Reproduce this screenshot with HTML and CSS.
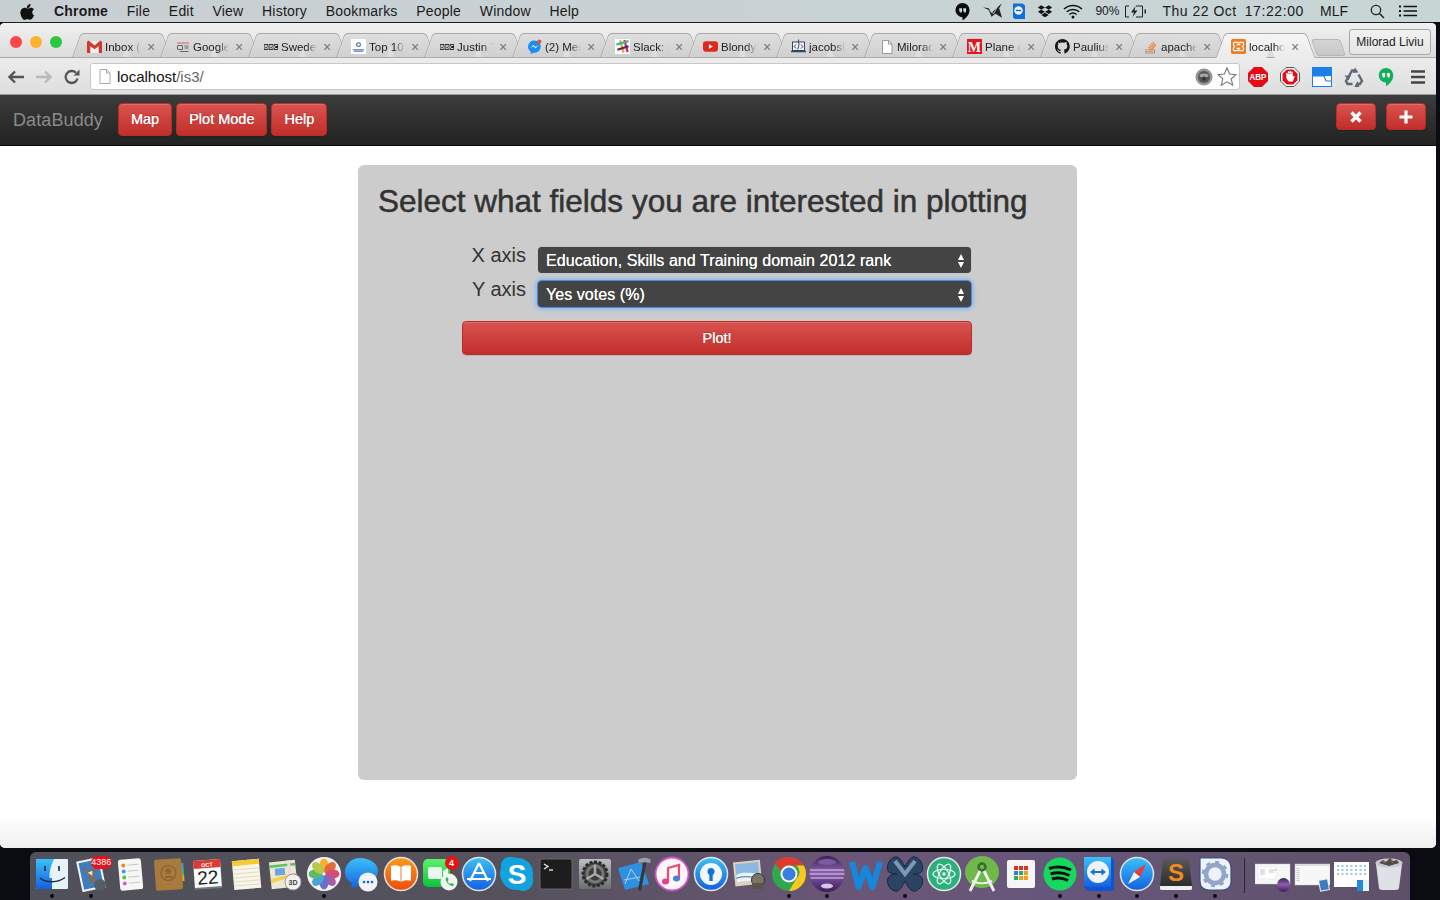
FILE: index.html
```html
<!DOCTYPE html>
<html lang="en">
<head>
<meta charset="utf-8">
<title>DataBuddy</title>
<link rel="stylesheet" href="styles.css">
</head>
<body>
<svg class="defs" width="0" height="0" aria-hidden="true">
  <defs>
    <linearGradient id="gBlue" x1="0" y1="0" x2="0" y2="1"><stop offset="0" stop-color="#3cc0f8"/><stop offset="1" stop-color="#1460e0"/></linearGradient>
    <linearGradient id="gOrange" x1="0" y1="0" x2="0" y2="1"><stop offset="0" stop-color="#fb9a1a"/><stop offset="1" stop-color="#f04a0c"/></linearGradient>
    <linearGradient id="gGreen" x1="0" y1="0" x2="0" y2="1"><stop offset="0" stop-color="#5ef06a"/><stop offset="1" stop-color="#0bc43a"/></linearGradient>
    <linearGradient id="gPurple" x1="0" y1="0" x2="0" y2="1"><stop offset="0" stop-color="#3d2154"/><stop offset=".45" stop-color="#8a5fae"/><stop offset="1" stop-color="#3c1c5a"/></linearGradient>
    <linearGradient id="gGrey" x1="0" y1="0" x2="0" y2="1"><stop offset="0" stop-color="#b9c0c2"/><stop offset="1" stop-color="#6c6f70"/></linearGradient>
    <linearGradient id="gSub" x1="0" y1="0" x2="0" y2="1"><stop offset="0" stop-color="#5a5a5a"/><stop offset="1" stop-color="#2c2c2c"/></linearGradient>
  </defs>
</svg>

<header class="menubar">
  <svg class="apple" viewBox="0 0 16 18"><path d="M11.300 1c.1 1.200-.4 2.300-1.100 3.100-.7.800-1.800 1.400-2.900 1.300-.1-1.100.4-2.300 1.100-3C9.100 1.600 10.300 1 11.300 1zM14.900 13.200c-.4 1-.6 1.400-1.100 2.200-.7 1.100-1.700 2.500-3 2.500-1.100 0-1.400-.7-2.900-.7s-1.800.7-2.900.7c-1.300 0-2.200-1.200-2.900-2.300C.2 12.500-.1 8.900 1.200 7c.9-1.300 2.300-2.100 3.700-2.100 1.400 0 2.200.8 3.400.8 1.100 0 1.800-.8 3.400-.8 1.200 0 2.500.7 3.400 1.800-3 1.700-2.500 5.900.8 6.500z" fill="#111"/></svg>
  <nav class="menu">
    <b>Chrome</b><span>File</span><span>Edit</span><span>View</span><span>History</span><span>Bookmarks</span><span>People</span><span>Window</span><span>Help</span>
  </nav>
  <div class="status">
    <svg class="st st-hang" viewBox="0 0 16 20"><path d="M8 1a7.500 7.500 0 0 0-7.500 7.500C.5 12.600 4 16 8 16v3.500c3.500-1.800 7.500-5.800 7.500-11A7.500 7.500 0 0 0 8 1z" fill="#0c0c0c"/><path d="M4.500 6.500h3v3c0 1.200-.8 1.800-1.800 2V10H4.500zM8.800 6.500h3v3c0 1.200-.8 1.800-1.800 2V10H8.800z" fill="#cfd8d8"/></svg>
    <svg class="st st-bird" viewBox="0 0 22 18"><path d="M1 5l6 3 3 7 4-3 7 4-3-10 3-5-6 5-5 5-3-5z" fill="#222"/><path d="M8 8l4 4 4-7" stroke="#cfd8d8" stroke-width=".8" fill="none"/></svg>
    <svg class="st st-tv" viewBox="0 0 14 18"><path d="M1 1.500h9.500l2.500 2V17l-2 0H3l-2-1.500z" fill="#1170d8"/><circle cx="6.500" cy="8.500" r="4.200" fill="#f2f6fa"/><path d="M3.500 8.500l2-1.500v1h2v-1l2 1.500-2 1.500v-1h-2v1z" fill="#1170d8"/></svg>
    <svg class="st st-drop" viewBox="0 0 18 16"><path d="M4.700 1L1 3.500l3.700 2.400L9 3.500zM13.300 1L9 3.500l4.300 2.400L17 3.500zM1 8.300l3.700 2.500L9 8.300 4.700 5.900zM13.300 5.900L9 8.300l4.300 2.500L17 8.300zM4.800 11.800L9 14.400l4.200-2.600L9 9.300z" fill="#111"/></svg>
    <svg class="st st-wifi" viewBox="0 0 20 15"><path d="M1 5c5-4.800 13-4.800 18 0M3.700 7.800c3.600-3.200 9-3.200 12.600 0M6.400 10.500c2.100-1.700 5.100-1.700 7.200 0" fill="none" stroke="#111" stroke-width="1.500"/><circle cx="10" cy="13" r="1.500" fill="#111"/></svg>
    <span class="batt-txt">90%</span>
    <svg class="st st-batt" viewBox="0 0 23 13"><path d="M5 1H1.500v11H5M12 1h6.500v11H12" fill="none" stroke="#222"/><path d="M11.500 1L7 7.500h3L8.500 12l5-6.500h-3z" fill="#222"/><rect x="20.500" y="4.500" width="1.500" height="4" fill="#222"/></svg>
    <span class="date">Thu 22 Oct</span>
    <span class="time">17:22:00</span>
    <span class="mlf">MLF</span>
    <svg class="st st-search" viewBox="0 0 15 15"><circle cx="6" cy="6" r="4.700" fill="none" stroke="#222" stroke-width="1.300"/><path d="M9.500 9.500l4.500 4.500" stroke="#222" stroke-width="1.500"/></svg>
    <svg class="st st-list" viewBox="0 0 18 12"><path d="M4.500 1.500H18M4.500 6H18M4.500 10.500H18" stroke="#111" stroke-width="1.400"/><path d="M0 1.500h2M0 6h2M0 10.500h2" stroke="#111" stroke-width="1.800"/></svg>
  </div>
</header>

<div class="window">
  <div class="tabstrip">
    <div class="lights"><i class="light red"></i><i class="light yellow"></i><i class="light green"></i></div>
    <div class="tabs">
      <div class="tab">
        <svg class="fav fav-wide" viewBox="0 0 14 14"><rect y="2" width="14" height="11" fill="#eee"/><path d="M0 2.500v10.500h3V6.500L7 9.500l4-3V13h3V2.500L12.500 1.500 7 6 1.500 1.500z" fill="#d0392b"/></svg>
        <span class="tab-title">Inbox (1</span><span class="tab-x">×</span>
      </div>
      <div class="tab">
        <svg class="fav" viewBox="0 0 14 14"><path d="M1 3h12" stroke="#c66" stroke-width="1"/><path d="M1.500 5.500h5v4h-5zM8.500 6h4M8.500 8h4M4 11.500h8.500" fill="none" stroke="#666" stroke-width="1"/></svg>
        <span class="tab-title">Google</span><span class="tab-x">×</span>
      </div>
      <div class="tab">
        <svg class="fav" viewBox="0 0 15 14"><rect x="0" y="4" width="4.600" height="6" fill="#111"/><rect x="5.200" y="4" width="4.600" height="6" fill="#111"/><rect x="10.400" y="4" width="4.600" height="6" fill="#111"/><g class="bbc-letters"><text x="2.300" y="9">B</text><text x="7.500" y="9">B</text><text x="12.700" y="9">C</text></g></svg>
        <span class="tab-title">Sweden</span><span class="tab-x">×</span>
      </div>
      <div class="tab">
        <svg class="fav fav-wide" viewBox="0 0 16 16"><rect width="16" height="16" fill="#fff"/><circle cx="8" cy="6" r="2" fill="none" stroke="#3a5fa5" stroke-width="1.200"/><path d="M2 11.500h12M3 13h10" stroke="#3a5fa5" stroke-width="1"/></svg>
        <span class="tab-title">Top 10</span><span class="tab-x">×</span>
      </div>
      <div class="tab">
        <svg class="fav" viewBox="0 0 15 14"><rect x="0" y="4" width="4.600" height="6" fill="#111"/><rect x="5.200" y="4" width="4.600" height="6" fill="#111"/><rect x="10.400" y="4" width="4.600" height="6" fill="#111"/><g class="bbc-letters"><text x="2.300" y="9">B</text><text x="7.500" y="9">B</text><text x="12.700" y="9">C</text></g></svg>
        <span class="tab-title">Justin T</span><span class="tab-x">×</span>
      </div>
      <div class="tab">
        <svg class="fav fav-wide" viewBox="0 0 14 14"><path d="M7 1.500a6 5.700 0 0 0-3.500 10.300V14l2.200-1.200A6 5.700 0 1 0 7 1.500z" fill="#1a8cf5"/><path d="M3 8.500l3-3 2 2 3-2-3 3.300-2-2z" fill="#fff"/><circle cx="11.500" cy="2.500" r="2" fill="#e8513a"/></svg>
        <span class="tab-title">(2) Mes</span><span class="tab-x">×</span>
      </div>
      <div class="tab">
        <svg class="fav fav-wide" viewBox="0 0 16 16"><rect width="16" height="16" fill="#fff"/><path d="M5.500 1.500l3.500 13" stroke="#e9a820" stroke-width="2.400"/><path d="M10 1l3.500 13" stroke="#e01e5a" stroke-width="2.400"/><path d="M1.500 6l13-3.800" stroke="#3eb991" stroke-width="2.400"/><path d="M2.500 11.500l12-3.800" stroke="#4b2a6a" stroke-width="2.400"/></svg>
        <span class="tab-title">Slack: |</span><span class="tab-x">×</span>
      </div>
      <div class="tab">
        <svg class="fav fav-wide" viewBox="0 0 16 14"><rect y="1.500" width="16" height="11" rx="3" fill="#dc2a20"/><path d="M6.300 4.500v5l4.200-2.500z" fill="#fff"/></svg>
        <span class="tab-title">Blondy</span><span class="tab-x">×</span>
      </div>
      <div class="tab">
        <svg class="fav fav-wide" viewBox="0 0 15 14"><rect x="1.500" y="2.500" width="12" height="8.500" fill="#f4f4f4" stroke="#33466a"/><path d="M0 12h15" stroke="#33466a" stroke-width="1.500"/><path d="M5 5l-1.800 2L5 9M10 5l1.800 2L10 9M8.300 4L6.700 10M7.500 0v4" fill="none" stroke="#33466a"/></svg>
        <span class="tab-title">jacobsl</span><span class="tab-x">×</span>
      </div>
      <div class="tab">
        <svg class="fav" viewBox="0 0 14 14"><path d="M2.500 .5h6l3.500 3.500v9.500H2.500z" fill="#fff" stroke="#999"/><path d="M8.500 .5V4H12" fill="none" stroke="#999"/></svg>
        <span class="tab-title">Milorad</span><span class="tab-x">×</span>
      </div>
      <div class="tab">
        <svg class="fav fav-wide" viewBox="0 0 16 16"><rect width="16" height="16" fill="#e8141c"/><text class="mail-m" x="8" y="14">M</text></svg>
        <span class="tab-title">Plane c</span><span class="tab-x">×</span>
      </div>
      <div class="tab">
        <svg class="fav fav-wide" viewBox="0 0 16 16"><path d="M8 0a8 8 0 0 0-2.500 15.600c.4.100.5-.2.500-.4v-1.400c-2.200.5-2.700-1-2.700-1-.4-.9-.9-1.200-.9-1.200-.7-.5.100-.5.100-.5.800.1 1.200.8 1.200.8.700 1.200 1.900.9 2.300.7.100-.5.300-.9.500-1.100-1.800-.2-3.600-.9-3.600-4 0-.9.300-1.600.8-2.100-.1-.2-.4-1 .1-2.100 0 0 .7-.2 2.200.8a7.600 7.600 0 0 1 4 0c1.500-1 2.200-.8 2.200-.8.400 1.100.2 1.900.1 2.100.5.600.8 1.300.8 2.100 0 3.100-1.900 3.700-3.700 3.900.3.300.6.800.6 1.500v2.200c0 .2.100.5.500.4A8 8 0 0 0 8 0z" fill="#161514"/></svg>
        <span class="tab-title">Paulius</span><span class="tab-x">×</span>
      </div>
      <div class="tab">
        <svg class="fav" viewBox="0 0 14 14"><path d="M2 9v4h8.500V9" fill="none" stroke="#9a9a9a" stroke-width="1.200"/><path d="M3.500 11.200h5.500M3.700 9.300l5.400.6M4.300 7.300l5.200 1.500M5.400 5.200l4.700 2.500M7 3.400l4 3.400M8.800 1.800l3 4" stroke="#ef8236" stroke-width="1.100"/></svg>
        <span class="tab-title">apache</span><span class="tab-x">×</span>
      </div>
      <div class="tab tab-active">
        <svg class="fav fav-wide" viewBox="0 0 16 16"><rect width="16" height="16" rx="2" fill="#f07c24"/><path d="M4 3.500h2.500c1 0 1.500.6 1.500 1.500 0-.9.500-1.500 1.500-1.500H12c1 0 1.500 1 1.500 2s-1 2.500-2 2.500c1 0 2 1.500 2 2.500s-.5 2-1.500 2H9.500C8.500 12.500 8 11.900 8 11c0 .9-.5 1.500-1.500 1.500H4c-1 0-1.500-1-1.500-2S3.500 8 4.500 8c-1 0-2-1.500-2-2.500s.5-2 1.500-2zM6 6h4M6 10h4" fill="none" stroke="#fff" stroke-width="1.300"/></svg>
        <span class="tab-title">localho</span><span class="tab-x">×</span>
      </div>
    </div>
    <i class="newtab"></i>
    <button class="profile" type="button">Milorad Liviu</button>
  </div>

  <div class="toolbar">
    <svg class="tool" viewBox="0 0 16 14"><path d="M7 1.500L1.500 7 7 12.500M2 7h14" fill="none" stroke="#555" stroke-width="2.300"/></svg>
    <svg class="tool tool-fwd" viewBox="0 0 16 14"><path d="M9 1.500L14.500 7 9 12.500M14 7H0" fill="none" stroke="#b9b9b9" stroke-width="2.300"/></svg>
    <svg class="tool tool-rel" viewBox="0 0 16 16"><path d="M13.500 9.500A6 6 0 1 1 12 3.800" fill="none" stroke="#555" stroke-width="2.300"/><path d="M9.500 6.500H15.500V.5z" fill="#555"/></svg>
    <div class="omnibox">
      <svg class="doc" viewBox="0 0 12 15"><path d="M1 .5h6.500L11 4v10.500H1z" fill="#fff" stroke="#aaa"/><path d="M7.500 .5V4H11" fill="none" stroke="#aaa"/></svg>
      <span class="host">localhost</span><span class="path">/is3/</span>
      <svg class="globe" viewBox="0 0 18 18"><circle cx="9" cy="9" r="8.500" fill="#959595"/><circle cx="9" cy="9" r="6" fill="#555"/><ellipse cx="9" cy="7.500" rx="4.500" ry="2" fill="#a5a5a5"/><circle cx="9" cy="10.500" r="2" fill="#333"/></svg>
      <svg class="star" viewBox="0 0 20 19"><path d="M10 1l2.700 6 6.300.6-4.800 4.200 1.500 6.400L10 14.800 4.300 18.200l1.500-6.400L1 7.600 7.300 7z" fill="#fff" stroke="#777" stroke-width="1.100"/></svg>
    </div>
    <div class="exts">
      <svg class="ext" viewBox="0 0 20 20"><path d="M6 0h8l6 6v8l-6 6H6l-6-6V6z" fill="#e30d16"/><text class="abp" x="10" y="13.300" textLength="17" lengthAdjust="spacingAndGlyphs">ABP</text></svg>
      <svg class="ext" viewBox="0 0 20 20"><path d="M6 .5h8L19.500 6v8L14 19.500H6L.5 14V6z" fill="#fff" stroke="#555"/><path d="M6.700 2.500h6.600L17.500 6.700v6.600L13.300 17.500H6.700L2.500 13.300V6.700z" fill="#e30d16"/><path d="M7 7v-.5M8.700 6V4.800M10.400 6V4.500M12.100 6.500V5.300" stroke="#fff" stroke-width="1.500" stroke-linecap="round"/><path d="M6.300 7h6.600v3l1.300-1.300.6.500-2 5.300H8.500l-2.200-3.500z" fill="#fff"/></svg>
      <svg class="ext" viewBox="0 0 20 20"><rect width="20" height="20" fill="#1c7ee8"/><rect x="1" y="9" width="18" height="10" fill="#fff"/><path d="M1 9h11l2 5h5" fill="none" stroke="#1c7ee8" stroke-width="1.200"/></svg>
      <svg class="ext" viewBox="0 0 20 20"><g fill="none" stroke="#5b6b7c" stroke-width="2.400"><path d="M4.500 10L8 3.500h3.500"/><path d="M14.500 7.500L18 14l-2 3h-3"/><path d="M8.500 17H3.500L2 14l1.500-2.500"/></g><path d="M11 .5l3.500 5-6 .5zM10 20.500L13.500 14l2 6.500zM.5 8.500L7 8.500l-2.500 5z" fill="#5b6b7c"/></svg>
      <svg class="ext" viewBox="0 0 20 22"><path d="M10 1a8 8 0 0 0-8 8c0 4.400 3.600 8 8 8v4c3.500-2 8-6.300 8-12a8 8 0 0 0-8-8z" fill="#0fb05a"/><path d="M5.800 6.500H9v3.500c0 1.200-.8 2-2 2.200V10.500H5.800zM11 6.500h3.200v3.500c0 1.200-.8 2-2 2.200V10.500H11z" fill="#fff"/></svg>
      <svg class="ext" viewBox="0 0 20 20"><path d="M3 4.500h14M3 10h14M3 15.500h14" stroke="#444" stroke-width="2.600"/></svg>
    </div>
  </div>

  <nav class="navbar">
    <a class="brand">DataBuddy</a>
    <div class="nav-btns">
      <button class="btn" type="button">Map</button>
      <button class="btn" type="button">Plot Mode</button>
      <button class="btn" type="button">Help</button>
    </div>
    <div class="nav-actions">
      <button class="btn btn-icon" type="button" aria-label="Close"><svg viewBox="0 0 14 14"><path d="M2.500 2.500l9 9M11.500 2.500l-9 9" stroke="#fff" stroke-width="3.400"/></svg></button>
      <button class="btn btn-icon" type="button" aria-label="Add"><svg viewBox="0 0 14 14"><path d="M7 .5v13M.5 7h13" stroke="#fff" stroke-width="3.200"/></svg></button>
    </div>
  </nav>

  <main class="page">
    <section class="panel">
      <h2 class="panel-title">Select what fields you are interested in plotting</h2>
      <form class="plot-form">
        <label class="axis-label" for="x-axis">X axis</label>
        <div class="select-wrap">
          <select class="field" id="x-axis"><option>Education, Skills and Training domain 2012 rank</option></select>
        </div>
        <label class="axis-label" for="y-axis">Y axis</label>
        <div class="select-wrap">
          <select class="field field-focus" id="y-axis"><option>Yes votes (%)</option></select>
        </div>
        <button class="btn btn-plot" type="button">Plot!</button>
      </form>
    </section>
  </main>
</div>

<footer class="dock">
  <div class="dock-item run"><svg viewBox="0 0 36 36"><rect x="2" y="3" width="32" height="30" rx="1" fill="#e6f3fb"/><path d="M2 4a1 1 0 0 1 1-1h17c-3 6-5 13-4.500 19H18v11H3a1 1 0 0 1-1-1z" fill="url(#gBlue)"/><path d="M11 10v5M25 10v5" stroke="#1a2a40" stroke-width="1.600"/><path d="M6 22c6 5 18 5 25-.5" fill="none" stroke="#1a2a40" stroke-width="1.400"/></svg></div>
  <div class="dock-item run"><svg viewBox="0 0 36 36"><g transform="rotate(-12 18 18)"><rect x="6" y="3" width="24" height="31" fill="#f4f4f4"/><rect x="8" y="5" width="20" height="27" fill="#3e7cc0"/><path d="M11 9l7 6 8-2-6 6 2 9-4-3-4 3 2-9z" fill="#8a6a46"/><path d="M15 16l5-1-1 5z" fill="#e8e0d0"/></g><circle cx="27" cy="29" r="6" fill="#555c66"/></svg><span class="badge badge-mail">4386</span></div>
  <div class="dock-item"><svg viewBox="0 0 36 36"><g transform="rotate(-5 18 18)"><rect x="7" y="3" width="23" height="31" rx="2.500" fill="#f6f6f4"/><circle cx="12" cy="9" r="2" fill="#f08a20"/><circle cx="12" cy="15" r="2" fill="#2f9ee8"/><circle cx="12" cy="21" r="2" fill="#3ecb4c"/><circle cx="12" cy="27" r="2" fill="#d85ad8"/><path d="M16 9h11M16 15h11M16 21h11M16 27h11" stroke="#bbb" stroke-width=".8"/></g></svg></div>
  <div class="dock-item"><svg viewBox="0 0 36 36"><g transform="rotate(-4 18 18)"><rect x="30" y="8" width="3" height="6" fill="#3fa0d8"/><rect x="30" y="14" width="3" height="6" fill="#46b46a"/><rect x="30" y="20" width="3" height="6" fill="#e2a32e"/><rect x="4" y="3" width="27" height="31" rx="2" fill="#a87a3e"/><circle cx="17.500" cy="17" r="7.500" fill="none" stroke="#8e6430" stroke-width="1.300"/><circle cx="17.500" cy="15" r="2.800" fill="#8e6430"/><path d="M12.500 22c1-3.500 9-3.500 10 0z" fill="#8e6430"/></g></svg></div>
  <div class="dock-item"><svg viewBox="0 0 36 36"><g transform="rotate(-4 18 18)"><rect x="5" y="4" width="27" height="28" fill="#fbfbfb"/><rect x="5" y="4" width="27" height="8" fill="#dd3a32"/><text class="cal-m" x="18.500" y="10.800">OCT</text><text class="cal-d" x="18.500" y="28">22</text><rect x="5" y="31" width="27" height="2" fill="#6e7a82"/></g></svg></div>
  <div class="dock-item"><svg viewBox="0 0 36 36"><g transform="rotate(-5 18 18)"><rect x="5" y="4" width="27" height="29" fill="#f8f6e8"/><rect x="5" y="4" width="27" height="5" fill="#f4cc32"/><path d="M5 13h27M5 17h27M5 21h27M5 25h27M5 29h27" stroke="#ddd6b8" stroke-width=".8"/></g></svg></div>
  <div class="dock-item"><svg viewBox="0 0 36 36"><g transform="rotate(-6 16 16)"><rect x="3" y="5" width="26" height="27" fill="#ece8d4"/><rect x="3" y="8" width="26" height="2.500" fill="#56c262"/><path d="M21 5h3v27h-3z" fill="#f0d9d6"/><path d="M3 22l26-4v3L3 26z" fill="#f4d04e"/><rect x="8" y="12" width="10" height="7" fill="#6aa6e0"/></g><circle cx="26" cy="26" r="8" fill="#f2f2f2" stroke="#999"/><text class="map3d" x="26" y="28.500">3D</text></svg></div>
  <div class="dock-item run"><svg viewBox="0 0 36 36"><circle cx="18" cy="18" r="17" fill="#f3f3f3"/><g transform="translate(18 18)"><ellipse cy="-8.500" rx="4.500" ry="7" fill="#f6b12f"/><ellipse cy="-8.500" rx="4.500" ry="7" fill="#e36a3a" transform="rotate(45)"/><ellipse cy="-8.500" rx="4.500" ry="7" fill="#d94c72" transform="rotate(90)"/><ellipse cy="-8.500" rx="4.500" ry="7" fill="#a85ca8" transform="rotate(135)"/><ellipse cy="-8.500" rx="4.500" ry="7" fill="#6a6fc8" transform="rotate(180)"/><ellipse cy="-8.500" rx="4.500" ry="7" fill="#4aa4d8" transform="rotate(225)"/><ellipse cy="-8.500" rx="4.500" ry="7" fill="#5cbb6a" transform="rotate(270)"/><ellipse cy="-8.500" rx="4.500" ry="7" fill="#b7c84a" transform="rotate(315)"/></g></svg></div>
  <div class="dock-item"><svg viewBox="0 0 36 36"><path d="M16 2C7 2 1 9 1 16c0 5 3 9 7 11l-1 6c3-1 6-3 8-5h3c8 0 16-5 16-13S25 2 16 2z" fill="url(#gBlue)"/><circle cx="24" cy="26" r="9.500" fill="#f1f3f6"/><path d="M18 34l3-3 3 1z" fill="#f1f3f6"/><circle cx="20" cy="26" r="1.300" fill="#1c5fd0"/><circle cx="24" cy="26" r="1.300" fill="#1c5fd0"/><circle cx="28" cy="26" r="1.300" fill="#1c5fd0"/></svg></div>
  <div class="dock-item"><svg viewBox="0 0 36 36"><circle cx="18" cy="18" r="16.500" fill="url(#gOrange)" stroke="#e8e2da" stroke-width="1.500"/><path d="M18 11c-3-2-7-2-10-1v15c3-1 7-1 10 1 3-2 7-2 10-1V10c-3-1-7-1-10 1z" fill="#fff"/><path d="M18 11v15" stroke="#d06010" stroke-width=".8"/></svg></div>
  <div class="dock-item"><svg viewBox="0 0 36 36"><rect x="1" y="3" width="27" height="28" rx="5" fill="url(#gGreen)"/><rect x="6" y="11" width="14" height="12" rx="2" fill="#eaf9ee"/><path d="M21 15l5-3v10l-5-3z" fill="#eaf9ee"/><circle cx="27" cy="26" r="8.500" fill="#f2f4f2"/><path d="M24 21.500l2 .3.500 2.500-1 1c.6 1.300 1.600 2.300 2.700 2.800l1-1 2.300.6.200 2c-3.600 1.400-9.400-4.600-7.700-8.200z" fill="#28c040"/></svg><span class="badge badge-ft">4</span></div>
  <div class="dock-item"><svg viewBox="0 0 36 36"><circle cx="18" cy="18" r="16.500" fill="url(#gBlue)" stroke="#dfe3e8" stroke-width="1.500"/><path d="M18 7l-9 18M18 7l9 18M6 23h24M13 17l9 0" stroke="#fff" stroke-width="2.200" fill="none"/></svg></div>
  <div class="dock-item"><svg viewBox="0 0 36 36"><path d="M2 10C2 4 7 0 13 1c2 .4 3 .8 5 .8 9 0 16 7 16 15 0 2-.3 3-.3 4 2 8-3 15-11 14-2-.3-3-1-6-1C8 34 1 26 1 17c0-2 1-3 1-7z" fill="#10a3e0"/><text class="skype" x="18" y="28">S</text></svg></div>
  <div class="dock-item"><svg viewBox="0 0 36 36"><rect x="2" y="3" width="32" height="30" rx="2" fill="#1d1d1d" stroke="#666"/><path d="M6 8l4 2.500-4 2.500" fill="none" stroke="#eee" stroke-width="1.300"/><path d="M11 14h4" stroke="#eee" stroke-width="1.300"/></svg></div>
  <div class="dock-item"><svg viewBox="0 0 36 36"><rect x="2" y="3" width="32" height="30" rx="2" fill="url(#gGrey)"/><circle cx="18" cy="18" r="12" fill="#444" stroke="#2c2c2c" stroke-width="3" stroke-dasharray="3 1.600"/><circle cx="18" cy="18" r="9.500" fill="#777"/><circle cx="18" cy="18" r="6.500" fill="#3c3c3c"/><path d="M18 18V8.500M18 18l8.500 5M18 18l-8.500 5" stroke="#aaa" stroke-width="2.600"/></svg></div>
  <div class="dock-item"><svg viewBox="0 0 36 36"><path d="M2 12l23-6 8 22-24 6z" fill="#2f8fe0"/><path d="M15 13l-6 15M15 13l8 12M8 24l16-3" stroke="#a6d4f8" stroke-width="1" fill="none"/><path d="M28 3l-6 31 3 1 6-31z" fill="#33383c"/><path d="M22 4c4-3 9-3 13 0l-1 3c-4-1-7-1-11 0z" fill="#9aa0a4"/></svg></div>
  <div class="dock-item"><svg viewBox="0 0 36 36"><circle cx="18" cy="18" r="16.500" fill="#fdf7fa" stroke="#d052c8" stroke-width="1.800"/><path d="M14 25V12l11-3v13" fill="none" stroke="#ec4a70" stroke-width="2.200"/><ellipse cx="11.500" cy="25.500" rx="3.500" ry="3" fill="#e8408a"/><ellipse cx="22.500" cy="22.500" rx="3.500" ry="3" fill="#4a7de0"/></svg></div>
  <div class="dock-item"><svg viewBox="0 0 36 36"><circle cx="18" cy="18" r="16.500" fill="url(#gBlue)" stroke="#dfe6ec" stroke-width="1.500"/><circle cx="18" cy="18" r="11" fill="#f4f7fa"/><circle cx="18" cy="15.500" r="3.500" fill="#1572d8"/><rect x="16.300" y="16" width="3.400" height="9" fill="#1572d8"/></svg></div>
  <div class="dock-item"><svg viewBox="0 0 36 36"><g transform="rotate(-6 16 16)"><rect x="2" y="5" width="27" height="24" fill="#ddd2bc"/><rect x="4" y="7" width="23" height="18" fill="#8cb8e4"/><path d="M4 18c6-3 12-1 23 1v6H4z" fill="#eef3f6"/><path d="M4 21c7-2 14 0 23 2" stroke="#3e6e9e" fill="none"/></g><circle cx="26" cy="24" r="6.500" fill="#7d7468" stroke="#333"/><rect x="20" y="27" width="12" height="6" rx="2" fill="#5c5448"/></svg></div>
  <div class="dock-item run"><svg viewBox="0 0 36 36"><circle cx="18" cy="18" r="17" fill="#2fa84e"/><path d="M18 1a17 17 0 0 1 14.700 8.500H18a8.500 8.500 0 0 0-8 5.500L3.500 7A17 17 0 0 1 18 1z" fill="#dd3a30"/><path d="M32.700 9.500A17 17 0 0 1 18 35l7.500-12.500a8.500 8.500 0 0 0 0-13z" fill="#fbc71b"/><circle cx="18" cy="18" r="8.500" fill="#f4f4f4"/><circle cx="18" cy="18" r="6.500" fill="#3a7fe0"/></svg></div>
  <div class="dock-item run"><svg viewBox="0 0 36 36"><ellipse cx="18" cy="18" rx="17.500" ry="18" fill="url(#gPurple)"/><path d="M1 14h34M.5 18h35M1.500 22h33" stroke="#e2d4ee" stroke-width="1.100"/><ellipse cx="18" cy="6" rx="9" ry="3" fill="#7d5a9e"/><ellipse cx="18" cy="30" rx="6" ry="2.500" fill="#d8c4e8"/></svg></div>
  <div class="dock-item"><svg viewBox="0 0 36 36"><path d="M4 6l6.500 25 7-19 7 19L32 6" fill="none" stroke="#1587dc" stroke-width="6" stroke-linejoin="round"/></svg></div>
  <div class="dock-item run"><svg viewBox="0 0 36 36"><path d="M8 1c4-1 7 4 10 10 3-6 6-11 10-10 5 1 9 8 7 14-1 2-4 3-9 3 5 0 8 2 9 4 2 6-2 12-7 13-4 1-7-4-10-10-3 6-6 11-10 10-5-1-9-7-7-13 1-2 4-4 9-4-5 0-8-1-9-3C-1 9 3 2 8 1z" fill="#2a4462" stroke="#16283c"/><path d="M8 5c3 4 7 9 10 13 3-4 7-9 10-13" fill="none" stroke="#7b99b4" stroke-width="4"/></svg></div>
  <div class="dock-item"><svg viewBox="0 0 36 36"><circle cx="18" cy="18" r="16.500" fill="#2cb07c" stroke="#e2ece6" stroke-width="1.500"/><g fill="none" stroke="#e8fff4" stroke-width="1.200"><ellipse cx="18" cy="18" rx="11" ry="4.500"/><ellipse cx="18" cy="18" rx="11" ry="4.500" transform="rotate(60 18 18)"/><ellipse cx="18" cy="18" rx="11" ry="4.500" transform="rotate(120 18 18)"/></g><circle cx="18" cy="18" r="1.800" fill="#e8fff4"/></svg></div>
  <div class="dock-item"><svg viewBox="0 0 36 36"><ellipse cx="18" cy="16" rx="17" ry="16" fill="#6fb94c"/><circle cx="18" cy="11" r="3.500" fill="none" stroke="#3c6a30" stroke-width="2.500"/><path d="M16 15L6 35M20 15l10 20" stroke="#f0f2f0" stroke-width="2.800"/><path d="M8 25c6 3 14 3 20 0" fill="none" stroke="#f0f2f0" stroke-width="2"/></svg></div>
  <div class="dock-item"><svg viewBox="0 0 36 36"><rect x="4" y="4" width="28" height="28" rx="2" fill="#f6f6f6"/><g class="launch"><rect x="11" y="10" width="4" height="4" fill="#e0302a"/><rect x="16" y="10" width="4" height="4" fill="#e0302a"/><rect x="21" y="10" width="4" height="4" fill="#e0302a"/><rect x="11" y="15" width="4" height="4" fill="#2f7ce0"/><rect x="16" y="15" width="4" height="4" fill="#2faa58"/><rect x="21" y="15" width="4" height="4" fill="#f0a020"/><rect x="11" y="20" width="4" height="4" fill="#2faa58"/><rect x="16" y="20" width="4" height="4" fill="#f0a020"/><rect x="21" y="20" width="4" height="4" fill="#f0a020"/></g></svg></div>
  <div class="dock-item run"><svg viewBox="0 0 36 36"><circle cx="18" cy="18" r="16.500" fill="#16d85e"/><path d="M7 12.500c8-2.500 15-2 22 1.500M8.500 18c7-2 13-1.500 19 1.500M10 23c5-1.500 11-1 16 1.500" fill="none" stroke="#111" stroke-width="3"/></svg></div>
  <div class="dock-item run"><svg viewBox="0 0 36 36"><path d="M3 1h27l3 3 0 30-3 1H7l-4-4z" fill="#1053d0"/><path d="M3 1h27v30H6l-3-1z" fill="url(#gBlue)"/><circle cx="17" cy="16" r="11" fill="#eef3f8"/><path d="M9 16l4.500-3.500V15h7v-2.500L25 16l-4.500 3.500V17h-7v2.500z" fill="#1572d8"/></svg></div>
  <div class="dock-item run"><svg viewBox="0 0 36 36"><circle cx="18" cy="18" r="16.500" fill="url(#gBlue)" stroke="#dde3ea" stroke-width="1.500"/><path d="M27 8L15 16l6 5z" fill="#ef3b30"/><path d="M9 28l6-12 6 5z" fill="#f4f4f4"/></svg></div>
  <div class="dock-item run"><svg viewBox="0 0 36 36"><path d="M5 4q0-2 2-2h22q2 0 2 2l3 26H2z" fill="url(#gSub)"/><path d="M2 30h32v3q0 1-2 1H4q-2 0-2-1z" fill="#eee"/><text class="sublime" x="18" y="25">S</text></svg></div>
  <div class="dock-item run"><svg viewBox="0 0 36 36"><path d="M3 2h22c6 1 9 5 9 10v14c0 5-4 8-9 8H12C6 34 3 30 3 25z" fill="#eef2fa" stroke="#34537e" stroke-width="1.200"/><circle cx="18" cy="18" r="9" fill="none" stroke="#95a5ca" stroke-width="4.500"/><circle cx="18" cy="18" r="11.500" fill="none" stroke="#95a5ca" stroke-width="3.500" stroke-dasharray="4 5"/></svg></div>
  <i class="dock-sep"></i>
  <div class="dock-item"><svg viewBox="0 0 36 36"><rect x="0" y="8" width="35" height="20" fill="#f7f7f7" stroke="#ccc" stroke-width=".5"/><rect x="3" y="11" width="18" height="12" fill="#fff" stroke="#ddd" stroke-width=".5"/><path d="M14 14h8M14 16h5M5 14h5M5 16h5M5 18h5" stroke="#aaa" stroke-width=".7"/><ellipse cx="28.500" cy="29" rx="6.500" ry="7" fill="url(#gPurple)"/></svg></div>
  <div class="dock-item"><svg viewBox="0 0 36 36"><rect x="1" y="8" width="35" height="21" fill="#f7f7f7" stroke="#ccc" stroke-width=".5"/><rect x="1" y="8" width="35" height="2" fill="#ddd"/><path d="M4 12v14" stroke="#ccc" stroke-width="3" stroke-dasharray="1 1"/><g transform="rotate(-10 30 29)"><rect x="25" y="23" width="10" height="12" fill="#eee"/><rect x="26" y="24" width="8" height="10" fill="#3e7cc0"/></g></svg></div>
  <div class="dock-item"><svg viewBox="0 0 36 36"><rect x="1" y="6" width="35" height="25" fill="#fff"/><path d="M4 10h29M4 14h29M4 18h29" stroke="#7db4e4" stroke-width="1.500" stroke-dasharray="2 2.500"/><rect x="24" y="24" width="12" height="11" fill="#2588e0"/><rect x="30" y="24" width="6" height="11" fill="#e6f3fb"/></svg></div>
  <div class="dock-item"><svg viewBox="0 0 36 36"><path d="M5 8h26l-3 24q-.3 2-3 2H11q-2.700 0-3-2z" fill="#dfe2e4"/><ellipse cx="18" cy="7" rx="13.500" ry="4.500" fill="#c8cbcd"/><path d="M8 7l4-3 3 2 4-4 3 3 4-1 2 3-10 3z" fill="#4c4c4c"/><path d="M12 5l2 2M20 4l2 3" stroke="#c0503c" stroke-width="1.200"/></svg></div>
</footer>
</body>
</html>
```
FILE: styles.css
```css
* { box-sizing: border-box; }
html, body { margin: 0; padding: 0; }
body {
  width: 1440px;
  height: 900px;
  overflow: hidden;
  background: #0b0b12;
  font-family: "Liberation Sans", Arial, sans-serif;
  color: #333;
}
.defs { display: block; }
i { display: block; }

/* macOS menu bar */
.menubar {
  height: 22px;
  display: flex;
  align-items: center;
  background: linear-gradient(90deg, #c8cfd3, #c8d5d5);
  color: #1a1a1a;
  font-size: 14px;
  padding-left: 20px;
}
.apple { width: 15px; height: 17px; margin-right: 19px; flex: none; }
.menu { display: flex; gap: 18.700px; letter-spacing: .2px; }
.menu b { margin-right: 0; }
.status { margin-left: auto; display: flex; align-items: center; }
.st { display: block; flex: none; }
.st-hang { width: 15px; height: 19px; margin-right: 12px; }
.st-bird { width: 21px; height: 18px; margin-right: 9px; }
.st-tv { width: 14px; height: 18px; margin-right: 11px; }
.st-drop { width: 16px; height: 15px; margin-right: 10px; }
.st-wifi { width: 20px; height: 15px; margin-right: 12px; }
.batt-txt { font-size: 12px; margin-right: 5px; }
.st-batt { width: 23px; height: 13px; margin-right: 15px; }
.date { margin-right: 8px; letter-spacing: .5px; }
.time { margin-right: 16px; letter-spacing: .6px; }
.mlf { margin-right: 22px; }
.st-search { width: 15px; height: 15px; margin-right: 14px; }
.st-list { width: 18px; height: 12px; margin-right: 23px; }

/* Browser window */
.window {
  width: 1436px;
  height: 826px;
  display: flex;
  flex-direction: column;
  border-top: 1px solid #1e1e1e;
  border-radius: 5px;
  overflow: hidden;
  background: #fff;
}
.tabstrip {
  height: 35px;
  flex: none;
  display: flex;
  align-items: flex-end;
  background: linear-gradient(#f1f1f1, #dcdcdc);
  border-bottom: 1px solid #aaa;
}
.lights { display: flex; gap: 8px; align-self: flex-start; padding: 13px 0 0 10px; width: 78px; flex: none; }
.light { width: 12px; height: 12px; border-radius: 50%; }
.red { background: #fc4549; }
.yellow { background: #fdb32a; }
.green { background: #2ac73f; }

.tabs { display: flex; flex: none; margin-bottom: -1px; }
.tab {
  width: 88px;
  height: 25px;
  flex: none;
  display: flex;
  align-items: center;
  padding: 2px 0 0 10px;
  position: relative;
  isolation: isolate;
  font-size: 11.500px;
  color: #222;
}
.tab::before, .tab::after {
  content: "";
  position: absolute;
  top: 0;
  bottom: 0;
  z-index: -1;
  background: linear-gradient(#dedede, #d0d0d0);
  border: 1px solid #a9a9a9;
  border-bottom-color: #aaa;
}
.tab::before { left: -2px; right: 44%; transform: skewX(-20deg); border-right: 0; border-radius: 4px 0 0 0; }
.tab::after { left: 55%; right: -1px; transform: skewX(20deg); border-left: 0; border-radius: 0 4px 0 0; }
.tab-active::before, .tab-active::after { background: linear-gradient(#f5f5f5, #ececec); border-bottom-color: #ececec; }
.fav { width: 14px; height: 14px; flex: none; margin-right: 3px; display: block; }
.fav-wide { width: 15px; height: 15px; margin-left: -1px; }
.tab-title {
  width: 36px;
  flex: none;
  white-space: nowrap;
  -webkit-mask: linear-gradient(90deg, #000 70%, transparent) no-repeat;
  mask: linear-gradient(90deg, #000 70%, transparent) no-repeat;
}
.tab-x { width: 10px; margin-left: 5px; text-align: center; color: #777; font-size: 14px; line-height: 14px; flex: none; }
.bbc-letters text { fill: #fff; font: bold 5.500px "Liberation Sans", sans-serif; text-anchor: middle; }
.mail-m { fill: #fff; font: bold 15px "Liberation Serif", serif; text-anchor: middle; }
.newtab {
  width: 29px;
  height: 17px;
  margin: 0 0 1px 4px;
  flex: none;
  transform: skewX(18deg);
  background: linear-gradient(#d4d4d4, #c8c8c8);
  border: 1px solid #b5b5b5;
  border-radius: 3px;
}
.profile {
  width: 82px;
  height: 26px;
  margin: 0 0 2px 6px;
  padding: 0;
  flex: none;
  align-self: flex-end;
  background: linear-gradient(#f1f1f1, #e6e6e6);
  border: 1px solid #a8a8a8;
  border-radius: 3px;
  font: 12px "Liberation Sans", sans-serif;
  color: #222;
}

.toolbar {
  height: 37px;
  flex: none;
  display: flex;
  align-items: center;
  padding: 1px 0 0 8px;
  background: linear-gradient(#ececec, #dedede);
  border-bottom: 1px solid #9c9c9c;
}
.tool { width: 16px; height: 14px; flex: none; display: block; }
.tool-fwd { margin-left: 12px; }
.tool-rel { margin-left: 12px; height: 16px; }
.omnibox {
  width: 1150px;
  height: 27px;
  margin-left: 10px;
  flex: none;
  display: flex;
  align-items: center;
  padding: 0 2px 0 8px;
  background: #fff;
  border: 1px solid #c6c6c6;
  border-radius: 3px;
  font-size: 15px;
}
.doc { width: 12px; height: 15px; margin-right: 6px; flex: none; }
.host { color: #111; }
.path { color: #666; }
.globe { width: 18px; height: 18px; margin-left: auto; margin-right: 4px; flex: none; }
.star { width: 20px; height: 19px; flex: none; }
.exts { display: flex; align-items: center; gap: 12px; margin-left: 8px; }
.ext { width: 20px; height: 20px; flex: none; display: block; }
.abp { fill: #fff; font: bold 9px "Liberation Sans", sans-serif; text-anchor: middle; }

/* Page navbar */
.navbar {
  height: 51px;
  flex: none;
  display: flex;
  align-items: flex-start;
  padding: 8px 10px 0 13px;
  background: linear-gradient(#3c3c3c, #222);
  border-bottom: 1px solid #080808;
}
.brand { font-size: 18px; letter-spacing: .1px; line-height: 34px; color: #8a8a8a; margin-right: 15px; }
.nav-btns { display: flex; gap: 4px; }
.nav-actions { display: flex; gap: 10px; margin-left: auto; }
.btn {
  height: 33px;
  padding: 0 12px 2px;
  background: linear-gradient(#d9534f, #c12e2a);
  border: 1px solid #b92c28;
  border-radius: 4px;
  box-shadow: inset 0 1px 0 rgba(255,255,255,.15), 0 1px 1px rgba(0,0,0,.1);
  color: #fff;
  font: 14.500px "Liberation Sans", sans-serif;
  text-shadow: 0 0 .6px #fff, 0 -1px 0 rgba(0,0,0,.2);
}
.btn-icon { width: 40px; height: 27px; padding: 0; display: flex; align-items: center; justify-content: center; }
.btn-icon svg { width: 14px; height: 14px; display: block; }

/* Main panel */
.page {
  flex: 1;
  display: flex;
  justify-content: center;
  align-items: flex-start;
  padding: 19px 1px 0 0;
  background: linear-gradient(#fff calc(100% - 30px), #eeeeee);
}
.panel {
  width: 719px;
  height: 615px;
  padding: 20px;
  background: #ccc;
  border-radius: 6px;
}
.panel-title {
  margin: 0 0 29px;
  font-size: 31.500px;
  line-height: 33px;
  font-weight: 400;
  color: #333;
  -webkit-text-stroke: .5px #333;
  white-space: nowrap;
}
.plot-form {
  width: 510px;
  margin-left: 84px;
  display: grid;
  grid-template-columns: 64px 1fr;
  column-gap: 12px;
  row-gap: 8px;
}
.axis-label { font-size: 20px; line-height: 16px; text-align: right; color: #333; }
.select-wrap { position: relative; height: 26px; margin-right: 1px; }
.select-wrap::before, .select-wrap::after {
  content: "";
  position: absolute;
  right: 7px;
  width: 0;
  height: 0;
  border-left: 3.500px solid transparent;
  border-right: 3.500px solid transparent;
  pointer-events: none;
}
.select-wrap::before { top: 7px; border-bottom: 6px solid #fff; }
.select-wrap::after { top: 15px; border-top: 6px solid #fff; }
.field {
  display: block;
  width: 100%;
  height: 26px;
  padding: 0 24px 0 8px;
  appearance: none;
  -webkit-appearance: none;
  background: #444;
  border: 0;
  border-radius: 4px;
  color: #fff;
  font: 16px "Liberation Sans", sans-serif;
  letter-spacing: .06px;
  text-shadow: 0 0 .5px #fff;
  box-shadow: 0 0 1px #888;
}
.field-focus { box-shadow: 0 0 0 1px #4a8ae0, 0 0 4px 2px #7ab4f4; }
.btn-plot {
  grid-column: 1 / -1;
  height: 34px;
  margin-top: 6px;
  padding: 0;
  width: 510px;
}

/* Dock */
.dock {
  width: 1380px;
  height: 48px;
  margin: 4px 0 0 30px;
  display: flex;
  padding: 4px 0 0 3px;
  border-radius: 6px 6px 0 0;
  background: linear-gradient(90deg, #4f5059 0%, #55525c 35%, #6a5677 60%, #66577a 75%, #5f5069 100%);
}
.dock-item {
  width: 38.750px;
  height: 36px;
  flex: none;
  display: flex;
  justify-content: center;
  position: relative;
}
.dock-item > svg { width: 36px; height: 36px; display: block; flex: none; }
.run::after {
  content: "";
  position: absolute;
  left: 50%;
  bottom: -6px;
  width: 4px;
  height: 4px;
  margin-left: -2px;
  border-radius: 50%;
  background: #0a0a0a;
}
.badge {
  position: absolute;
  height: 13px;
  border-radius: 7px;
  background: #e8101a;
  color: #fff;
  font-size: 9px;
  line-height: 13px;
  text-align: center;
}
.badge-mail { top: 0; left: 19px; width: 21px; }
.badge-ft { top: 0; left: 24px; width: 14px; height: 14px; line-height: 14px; font-weight: bold; }
.dock-sep { width: 1px; height: 35px; margin: 2px 8.600px 0 10px; background: #2c2830; flex: none; }
.cal-m { fill: #fff; font: bold 5.500px "Liberation Sans", sans-serif; text-anchor: middle; }
.cal-d { fill: #222; font: 19px "Liberation Sans", sans-serif; text-anchor: middle; }
.map3d { fill: #444; font: bold 7px "Liberation Sans", sans-serif; text-anchor: middle; }
.skype { fill: #fff; font: bold 28px "Liberation Sans", sans-serif; text-anchor: middle; }
.sublime { fill: #f28b1e; font: bold 24px "Liberation Sans", sans-serif; text-anchor: middle; }
```
